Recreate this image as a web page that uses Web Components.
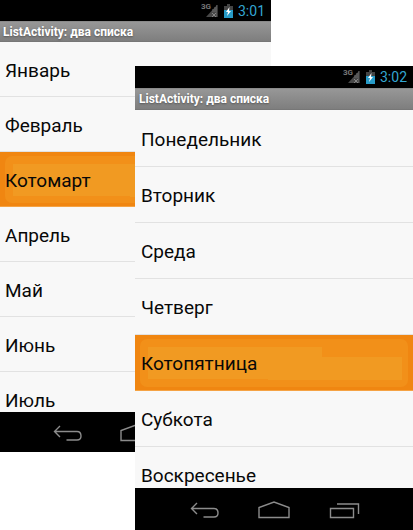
<!DOCTYPE html>
<html lang="ru">
<head>
<meta charset="utf-8">
<meta name="viewport" content="width=device-width, initial-scale=1">
<title>ListActivity: два списка</title>
<style>
body { margin: 0; background: #fff; font-family: Roboto, "Noto Sans", sans-serif; }
</style>
</head>
<body>
<screen-stack>
  <phone-screen class="back" time="3:01" heading="ListActivity: два списка">
    <list-row>Январь</list-row>
    <list-row>Февраль</list-row>
    <list-row selected>Котомарт</list-row>
    <list-row>Апрель</list-row>
    <list-row>Май</list-row>
    <list-row>Июнь</list-row>
    <list-row>Июль</list-row>
  </phone-screen>
  <phone-screen class="front" time="3:02" heading="ListActivity: два списка">
    <list-row>Понедельник</list-row>
    <list-row>Вторник</list-row>
    <list-row>Среда</list-row>
    <list-row>Четверг</list-row>
    <list-row selected>Котопятница</list-row>
    <list-row>Субкота</list-row>
    <list-row>Воскресенье</list-row>
  </phone-screen>
</screen-stack>

<template id="stack-template">
  <style>
    :host { display: grid; align-items: start; }
    ::slotted(*) { grid-area: 1 / 1; isolation: isolate; }
    ::slotted(.back) {
      margin-right: 142px;
      --bar: 21px; --row: 55px; --list: 370px; --list-top: 0; --nav: 40px; --pad: 5px; --title-pad: 3px;
    }
    ::slotted(.front) {
      margin: 66px 0 0 135px;
      --bar: 22px; --row: 56px; --list: 378px; --list-top: 1px; --nav: 42px; --pad: 6px; --title-pad: 4px;
    }
  </style>
  <slot></slot>
</template>

<template id="phone-template">
  <style>
    :host { display: flex; flex-direction: column; background: #f8f8f8; }
    h1 {
      box-sizing: border-box; height: var(--bar); margin: 0; padding-left: var(--title-pad);
      font-size: 12px; line-height: 20px; font-weight: 700; color: #fff; white-space: nowrap;
      background: linear-gradient(#979797, #7e7e7e);
      border-top: 1px solid #8a8a8a; border-bottom: 1px solid #777;
      text-shadow: 0 1px 2px #555;
    }
    main { box-sizing: border-box; height: var(--list); padding-top: var(--list-top); overflow: hidden; }
  </style>
  <status-bar></status-bar>
  <h1></h1>
  <main role="list"><slot></slot></main>
  <nav-bar></nav-bar>
</template>

<template id="status-template">
  <style>
    :host {
      display: flex; align-items: center; justify-content: flex-end; height: var(--bar);
      box-sizing: border-box; padding-right: 6px; background: #000;
    }
    .net { align-self: flex-start; font-size: 8px; line-height: 8px; font-weight: 700; color: #777; padding-top: 3px; margin-right: -5px; }
    .signal { width: 12px; height: 14px; margin-right: 6px; }
    .battery { width: 9px; height: 14px; margin-right: 5px; }
    time { font-size: 14px; line-height: 20px; color: #33a6d2; }
  </style>
  <span class="net">3G</span>
  <svg class="signal" viewBox="0 0 12 14" aria-hidden="true">
    <path d="M11 1V13H0Z" fill="#484848"/>
    <path d="M11 1V13M7 5V8M9 3V8" stroke="#686868" fill="none"/>
    <path d="M6 9l4 4M10 9l-4 4" stroke="#858585" fill="none"/>
  </svg>
  <svg class="battery" viewBox="0 0 9 14" aria-hidden="true">
    <path d="M3 0H6V2H9V14H0V2H3Z" fill="#444"/>
    <path d="M0 6H9V14H0Z" fill="#279bc8"/>
    <path d="M5.5 3L2 8H4L3 12L7 7H5Z" fill="#fff"/>
  </svg>
  <time></time>
</template>

<template id="row-template">
  <style>
    :host { display: block; height: var(--row); }
    button {
      position: relative; box-sizing: border-box; display: flex; align-items: center;
      width: 100%; height: 100%; padding: 3px var(--pad) 0; margin: 0;
      border: 0; border-bottom: 1px solid #e2e2e2; background: #f8f8f8;
      color: #080808; font: 400 19px/24px Roboto, "Noto Sans", sans-serif; text-align: left;
    }
    span { position: relative; }
    :host([selected]) button { background: #f08611; border-bottom-color: #f5a344; }
    :host([selected]) button::before {
      content: ""; position: absolute; inset: 4px 5px 3px; border-radius: 7px;
      background:
        linear-gradient(#f19a22, #f19a22) 8px 8px / 65% 32px no-repeat,
        linear-gradient(#f19a22, #f19a22) calc(100% - 6px) 18px / 50% 23px no-repeat,
        #f29019;
    }
  </style>
  <button type="button"><span><slot></slot></span></button>
</template>

<template id="nav-template">
  <style>
    :host { display: flex; justify-content: center; height: var(--nav); background: #000; }
    button {
      display: flex; align-items: center; justify-content: center; width: 25%;
      padding: 2px 0 0; margin: 0; border: 0; background: none;
    }
    svg { width: 32px; height: 18px; fill: none; stroke: #8c8c8c; stroke-width: 1.4; }
  </style>
  <button type="button" aria-label="Назад">
    <svg viewBox="0 0 32 18"><path d="M8 2L2.500 7.500L8 13M2.500 7.500H25Q29 7.500 29 12Q29 16 25 16H14.500"/></svg>
  </button>
  <button type="button" aria-label="Домой">
    <svg viewBox="0 0 32 18"><path d="M1 16.500V6.500L16 1L31 6.500V16.500Z"/></svg>
  </button>
  <button type="button" aria-label="Недавние">
    <svg viewBox="0 0 32 18"><path d="M2.500 7.500H25.500V16.500H2.500ZM9 3H30.500V13"/></svg>
  </button>
</template>

<script>
class TemplateElement extends HTMLElement {
  constructor() {
    super();
    this.attachShadow({ mode: "open" })
      .append(document.getElementById(this.constructor.template).content.cloneNode(true));
  }
}
class ScreenStack extends TemplateElement { static template = "stack-template"; }
class ListRow extends TemplateElement {
  static template = "row-template";
  connectedCallback() { this.setAttribute("role", "listitem"); }
}
class NavBar extends TemplateElement { static template = "nav-template"; }
class StatusBar extends TemplateElement {
  static template = "status-template";
  static observedAttributes = ["time"];
  attributeChangedCallback(name, old, value) {
    this.shadowRoot.querySelector("time").textContent = value;
  }
}
class PhoneScreen extends TemplateElement {
  static template = "phone-template";
  connectedCallback() {
    this.shadowRoot.querySelector("h1").textContent = this.getAttribute("heading");
    this.shadowRoot.querySelector("status-bar").setAttribute("time", this.getAttribute("time"));
  }
}
customElements.define("status-bar", StatusBar);
customElements.define("nav-bar", NavBar);
customElements.define("list-row", ListRow);
customElements.define("phone-screen", PhoneScreen);
customElements.define("screen-stack", ScreenStack);
</script>
</body>
</html>
